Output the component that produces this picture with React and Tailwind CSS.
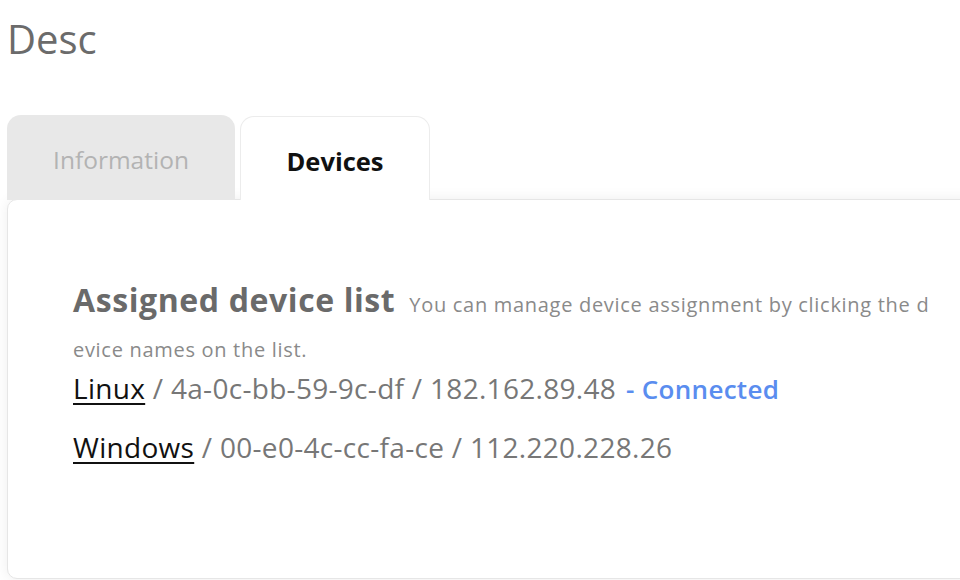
import React from "react";

export default function App() {
  return (
    <div className="w-[960px] h-[580px] overflow-hidden bg-white pl-[7px]" style={{ fontFamily: '"Open Sans", "Noto Sans", sans-serif' }}>
      <h1 className="pt-[12px] text-[40px] leading-[54px] text-[#6b6b6b] font-normal">Desc</h1>
      <div className="mt-[49px] flex gap-[5px] relative z-10">
        <div className="w-[228px] h-[85px] rounded-t-[14px] bg-[#e8e8e8] flex items-center justify-center text-[24.5px] text-[#b3b3b3] pt-[5px]">
          Information
        </div>
        <div className="w-[190px] h-[84px] mt-px rounded-t-[14px] bg-white border border-b-0 border-[#ececec] flex items-center justify-center text-[25.5px] font-bold text-[#111] pt-[5px]">
          Devices
        </div>
      </div>
      <div className="h-[380px] -mt-[1px] rounded-[10px] border border-[#e6e6e6] bg-white shadow-[0_0_14px_rgba(0,0,0,0.07)] pl-[65px] pt-[82px] w-[1000px]">
        <div className="w-[866px] text-[20px] leading-[45px] break-all">
          <span className="text-[32px] leading-[32px] font-bold text-[#6a6a6a] tracking-[0.6px]">Assigned device list</span>
          <span className="ml-[14px] text-[20px] text-[#8a8a8a] tracking-[0.7px]">You can manage device assignment by clicking the device names on the list.</span>
        </div>
        <div className="-mt-[4px] text-[28px] leading-[40px] text-[#777] tracking-[0.3px]">
          <span className="underline underline-offset-[4px] decoration-[1.5px] text-[#111]">Linux</span>
          <span> / 4a-0c-bb-59-9c-df / 182.162.89.48</span>
          <span className="ml-[10px] text-[26px] text-[#5a8def] font-semibold">- Connected</span>
        </div>
        <div className="mt-[18px] text-[28px] leading-[40px] text-[#777] tracking-[0.3px]">
          <span className="underline underline-offset-[4px] decoration-[1.5px] text-[#111]">Windows</span>
          <span> / 00-e0-4c-cc-fa-ce / 112.220.228.26</span>
        </div>
      </div>
    </div>
  );
}
